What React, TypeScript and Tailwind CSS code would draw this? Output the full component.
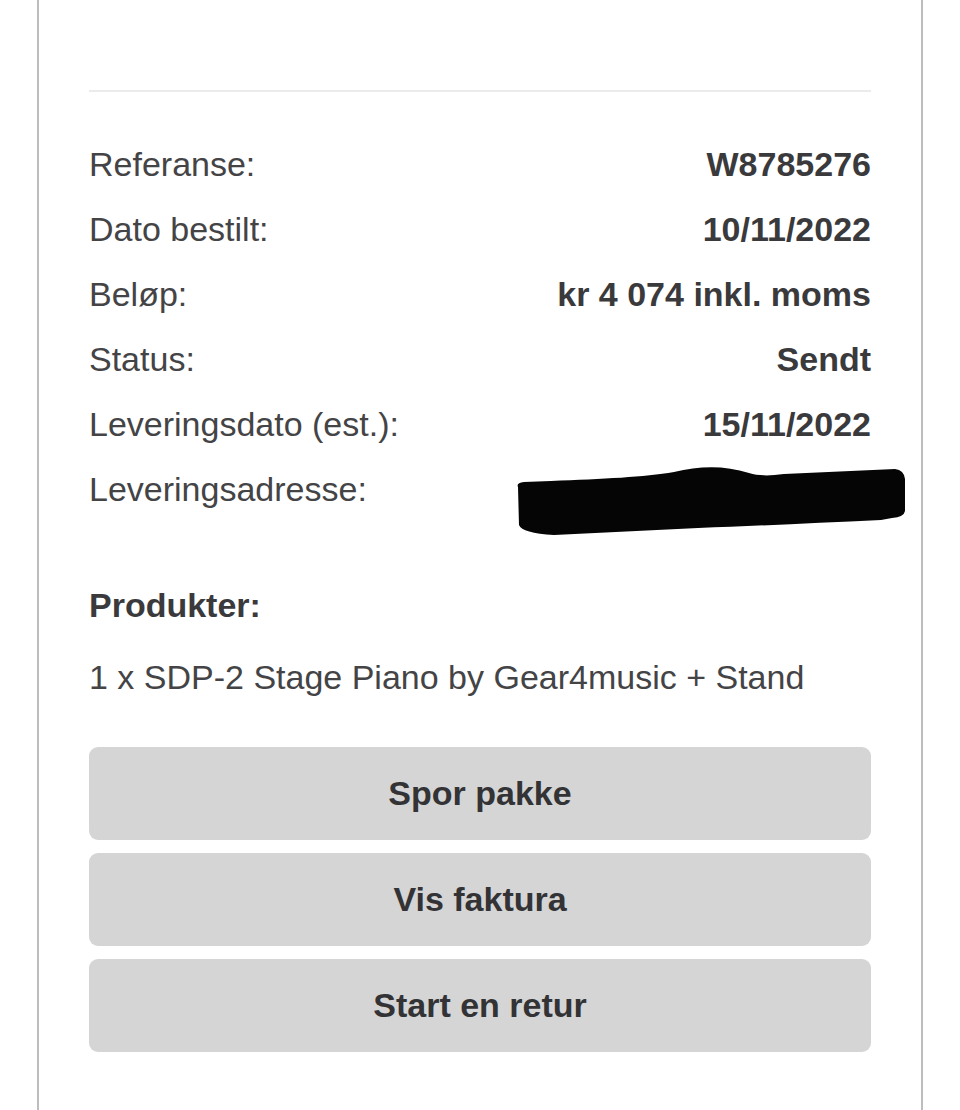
import React from 'react';

const rows: { label: string; value?: string }[] = [
  { label: 'Referanse:', value: 'W8785276' },
  { label: 'Dato bestilt:', value: '10/11/2022' },
  { label: 'Beløp:', value: 'kr 4 074 inkl. moms' },
  { label: 'Status:', value: 'Sendt' },
  { label: 'Leveringsdato (est.):', value: '15/11/2022' },
  { label: 'Leveringsadresse:' },
];

const actions = ['Spor pakke', 'Vis faktura', 'Start en retur'];

// black marker stroke that hides the address
const Redaction: React.FC = () => (
  <svg
    className="absolute left-[-357px] top-[-27px]"
    width="394"
    height="76"
    viewBox="0 0 394 76"
  >
    <path
      d="M4 24 Q2 20 10 19 L37 18 C90 16 130 14 160 9 C185 3 210 2 235 10 C245 13 255 13 270 11 L381 6 Q390 7 391 16 L391 48 Q390 54 378 55 L367 57 C300 60 240 63 184 65 L40 72 Q8 70 5 62 Z"
      fill="#050505"
    />
  </svg>
);

const App: React.FC = () => {
  return (
    <div className="min-h-[1110px] bg-white font-['Liberation_Sans',Arial,sans-serif]">
      <div className="ml-[37px] w-[886px] min-h-[1110px] border-x-2 border-[#bdbdbd] px-[50px] pt-[90px]">
        <div className="h-[2px] bg-[#ebebeb]" />

        <div className="mt-[40px]">
          {rows.map(row => (
            <div key={row.label} className="relative flex items-center justify-between h-[65px] text-[34px]">
              <span className="text-[#444446]">{row.label}</span>
              {row.value ? (
                <span className="font-bold text-[#3a3a3c]">{row.value}</span>
              ) : (
                <span className="relative">
                  <Redaction />
                </span>
              )}
            </div>
          ))}
        </div>

        <div className="mt-[51px] h-[65px] flex items-center text-[34px] font-bold text-[#3a3a3c]">
          Produkter:
        </div>
        <div className="mt-[7px] h-[65px] flex items-center text-[34px] text-[#444446]">
          1 x SDP-2 Stage Piano by Gear4music + Stand
        </div>

        <div className="mt-[37px] flex flex-col gap-[13px]">
          {actions.map(a => (
            <button
              key={a}
              className="h-[93px] w-full rounded-[9px] bg-[#d5d5d5] text-[34px] font-bold text-[#333335]"
            >
              {a}
            </button>
          ))}
        </div>
      </div>
    </div>
  );
};

export default App;
